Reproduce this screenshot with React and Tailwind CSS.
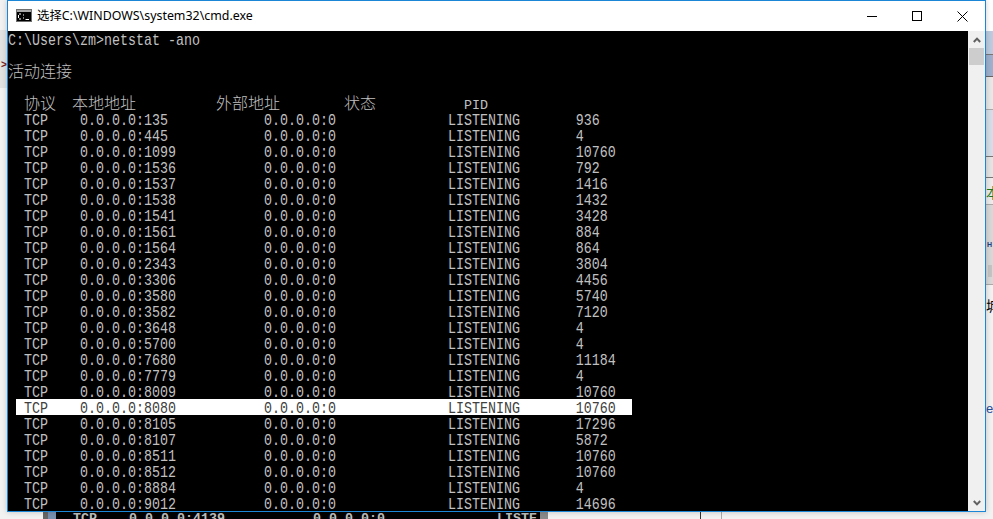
import React from 'react'

const rows = [
  ['135', '936'], ['445', '4'], ['1099', '10760'], ['1536', '792'], ['1537', '1416'],
  ['1538', '1432'], ['1541', '3428'], ['1561', '884'], ['1564', '864'], ['2343', '3804'],
  ['3306', '4456'], ['3580', '5740'], ['3582', '7120'], ['3648', '4'], ['5700', '4'],
  ['7680', '11184'], ['7779', '4'], ['8009', '10760'], ['8080', '10760'], ['8105', '17296'],
  ['8107', '5872'], ['8511', '10760'], ['8512', '10760'], ['8884', '4'], ['9012', '14696'],
]

function rowText (port, pid) {
  const local = ('0.0.0.0:' + port).padEnd(23, ' ')
  const foreign = '0.0.0.0:0'.padEnd(23, ' ')
  return '  TCP    ' + local + foreign + 'LISTENING       ' + pid
}

const Cjk = ({children}) => <span className="text-[16px] leading-[14px] font-['Noto_Sans_CJK_SC',sans-serif] font-light">{children}</span>

// console font is taller than Liberation Mono, so stretch each line a bit
const Line = ({children}) => (
  <div className="h-4 pt-[2px] flex items-center">
    <span className="leading-[13px] scale-y-[1.2]">{children}</span>
  </div>
)

function Console () {
  return (
    <div className="flex-1 bg-black text-[#c0c0c0] font-['Liberation_Mono',monospace] text-[13.333px] whitespace-pre overflow-hidden">
      <Line>C:\Users\zm&gt;netstat -ano</Line>
      <div className="h-4"></div>
      <div className="h-4 leading-[14px]"><Cjk>活动连接</Cjk></div>
      <div className="h-4"></div>
      <div className="h-4 leading-[14px]">{'  '}<Cjk>协议</Cjk>{'  '}<Cjk>本地地址</Cjk>{'          '}<Cjk>外部地址</Cjk>{'        '}<Cjk>状态</Cjk>{'           PID'}</div>
      {rows.map(([port, pid]) => (
        port === '8080'
          ? <div key={port} className="ml-[8px] w-[616px] bg-white text-[#404040]">
              <Line>{rowText(port, pid).slice(1)}</Line>
            </div>
          : <Line key={port}>{rowText(port, pid)}</Line>
      ))}
    </div>
  )
}

function CmdIcon () {
  return (
    <svg width="16" height="13" viewBox="0 0 16 13" className="shrink-0">
      <rect width="16" height="13" fill="#6e6e6e" />
      <rect x="1" y="1" width="14" height="2" fill="#a8a8a8" />
      <rect x="1" y="3" width="14" height="9" fill="#000" />
      <path d="M3 5H5M2.5 6V9M3 10H5M7 6H8M7 9H8M9.5 10.5H13" stroke="#fff" strokeWidth="1" fill="none" />
    </svg>
  )
}

function TitleBar () {
  return (
    <div className="h-[30px] bg-white flex items-center shrink-0">
      <div className="ml-2 flex items-center gap-[5px]">
        <CmdIcon />
        <span className="text-[12.4px] text-black font-['Noto_Sans','Noto_Sans_CJK_SC',sans-serif]">选择C:\WINDOWS\system32\cmd.exe</span>
      </div>
      <div className="ml-auto flex items-center">
        <div className="w-[45px] h-[30px] flex items-center justify-center">
          <div className="w-[10px] h-px bg-black"></div>
        </div>
        <div className="w-[45px] h-[30px] flex items-center justify-center">
          <div className="w-[10px] h-[10px] border border-black"></div>
        </div>
        <div className="w-[46px] h-[30px] flex items-center justify-center">
          <svg width="11" height="11" viewBox="0 0 11 11"><path d="M.5 .5L10.5 10.5M10.5 .5L.5 10.5" stroke="#000" strokeWidth="1" /></svg>
        </div>
      </div>
    </div>
  )
}

function Scrollbar () {
  return (
    <div className="w-[17px] bg-[#f0f0f0] flex flex-col items-center shrink-0">
      <div className="h-[17px] w-full flex items-center justify-center">
        <svg width="8" height="6" viewBox="0 0 8 6"><path d="M.8 5L4 1.6L7.2 5" stroke="#606060" strokeWidth="2" fill="none" /></svg>
      </div>
      <div className="w-[15px] h-[17px] bg-[#cdcdcd]"></div>
      <div className="mt-auto h-[17px] w-full flex items-center justify-center">
        <svg width="8" height="6" viewBox="0 0 8 6"><path d="M.8 1L4 4.4L7.2 1" stroke="#606060" strokeWidth="2" fill="none" /></svg>
      </div>
    </div>
  )
}

// bits of other windows showing around the cmd window
function LeftStrip () {
  return (
    <div className="w-[7px] flex flex-col shrink-0">
      <div className="h-[30px]"></div>
      <div className="h-[58px] bg-[#e2e2e2] pt-[29px] pl-px text-[10px] leading-[12px] font-bold text-[#7a2020] font-['Liberation_Sans',sans-serif]">&gt;</div>
    </div>
  )
}

function RightStrip () {
  return (
    <div className="w-[7px] flex flex-col overflow-hidden shrink-0 whitespace-nowrap">
      <div className="h-[31px] bg-white shrink-0"></div>
      <div className="h-[24px] bg-[#bccbdf] border-b border-[#777] shrink-0"></div>
      <div className="h-[22px] bg-[#9db0ce] border-b border-[#666] shrink-0"></div>
      <div className="h-[33px] bg-[#e8e8e8] border-b border-[#aaa] shrink-0"></div>
      <div className="h-[47px] bg-[#d5dee8] border-b border-[#777] shrink-0"></div>
      <div className="h-[21px] bg-[#e4e4e4] border-b border-[#777] shrink-0"></div>
      <div className="h-[27px] bg-[#ececec] border-b border-[#aaa] shrink-0 pt-[6px] text-[14px] leading-[16px] text-[#1a7a1a] font-['Noto_Sans_CJK_SC',sans-serif]">本</div>
      <div className="h-[80px] bg-[#d8d8d8] border-b border-[#aaa] shrink-0 pt-[36px] pl-px flex flex-col">
        <div className="text-[7px] leading-[8px] font-bold text-[#1f3f7f] font-['Liberation_Sans',sans-serif]">H</div>
        <div className="mt-[16px] ml-px w-[4px] h-[12px] bg-[#c4c4c4]"></div>
      </div>
      <div className="pt-[12px] text-[14px] leading-[16px] text-black font-['Noto_Sans_CJK_SC',sans-serif]">城</div>
      <div className="pt-[88px] text-[13px] leading-[16px] text-[#1f4f9f] font-['Liberation_Sans',sans-serif]">e</div>
    </div>
  )
}

function BottomStrip () {
  return (
    <div className="h-[7px] flex overflow-hidden">
      <div className="w-[43px]"></div>
      <div className="w-[5px] bg-[#666]"></div>
      <div className="w-[8px] bg-[#7a90b0]"></div>
      <div className="w-[484px] h-[7px] pl-[17px] bg-black overflow-hidden whitespace-pre text-[#c0c0c0] font-bold font-['Liberation_Mono',monospace] text-[13.333px] leading-[14px]">
        {'TCP    0.0.0.0:4139           0.0.0.0:0              LISTE'}
      </div>
      <div className="w-[8px] bg-[#8a8a8a]"></div>
      <div className="w-[152px]"></div>
      <div className="w-px bg-[#333]"></div>
      <div className="w-[20px]"></div>
      <div className="w-px bg-[#aaa]"></div>
    </div>
  )
}

export default function App () {
  return (
    <div className="w-[993px] h-[519px] overflow-hidden bg-[#f2f2f2] flex flex-col">
      <div className="h-[512px] flex shrink-0">
        <LeftStrip />
        <div className="w-[979px] border border-[#1c86d6] shadow-[0_0_6px_rgba(0,0,0,0.2)] flex flex-col bg-white relative shrink-0">
          <TitleBar />
          <div className="flex flex-1 min-h-0">
            <Console />
            <Scrollbar />
          </div>
        </div>
        <RightStrip />
      </div>
      <BottomStrip />
    </div>
  )
}
